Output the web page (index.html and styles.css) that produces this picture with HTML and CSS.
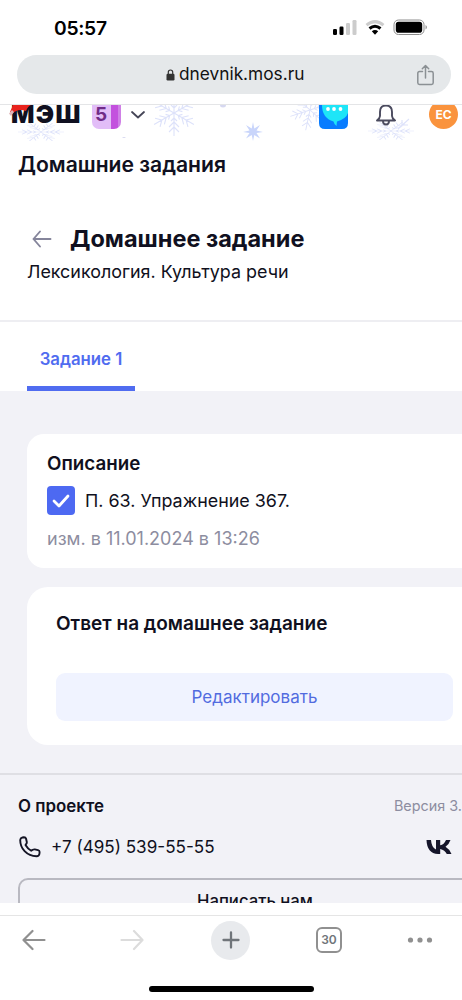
FILE: index.html
```
<!DOCTYPE html>
<html lang="ru">
<head>
<meta charset="utf-8">
<title>Домашние задания</title>
<link rel="stylesheet" href="styles.css">
</head>
<body>
<div class="phone">
  <div class="status">
    <span class="time">05:57</span>
    <svg class="status-icons" width="96" height="18" viewBox="0 0 96 18">
      <g><rect x="0" y="10" width="4" height="6" rx="1.2"/><rect x="6.5" y="7.5" width="4" height="8.500" rx="1.2"/><rect x="13" y="4" width="4" height="12" rx="1.200" fill="#ccc"/><rect x="19.500" y="1" width="4" height="15" rx="1.200" fill="#ccc"/></g>
      <g fill="none" stroke-width="3"><path d="M33.500 6.200Q42 -1 50.500 6.200" stroke="#ccc"/><path d="M36.500 9.500Q42 5 47.500 9.500" stroke="#000"/></g>
      <path d="M38.800 12.300Q42 9.700 45.200 12.300L42 15.700Z"/>
      <rect x="61" y="1" width="30" height="14.500" rx="4.500" fill="none" stroke="#8c8c8c"/><rect x="62.800" y="2.800" width="26.400" height="10.900" rx="2.800"/><path d="M92.500 6q3 2.200 0 4.600z" fill="#999"/>
    </svg>
  </div>
  <div class="address">
    <svg class="lock" width="9" height="12" viewBox="0 0 9 12"><rect x=".5" y="4.800" width="8" height="6.700" rx="1.200" fill="#333"/><path d="M2.300 5V3.200a2.200 2.200 0 0 1 4.400 0V5" fill="none" stroke="#333" stroke-width="1.200"/></svg>
    <span class="url">dnevnik.mos.ru</span>
    <svg class="share" width="20" height="22" viewBox="0 0 20 22" fill="none" stroke="#8b9094" stroke-width="1.500" stroke-linecap="round" stroke-linejoin="round"><path d="M6.500 7.500H3.500Q1.800 7.500 1.800 9.200V18.800Q1.800 20.500 3.500 20.500H15.500Q17.200 20.500 17.200 18.800V9.200Q17.200 7.500 15.500 7.500H12.500M9.500 14V1.700M6.300 4.700L9.500 1.500L12.700 4.700"/></svg>
  </div>
  <div class="page">
    <header class="site">
      <svg class="snow" width="462" height="36" viewBox="0 0 462 36" fill="none" stroke="#dde2fa" stroke-width="1.100">
        <defs>
          <g id="flake"><path id="arm" d="M0 0V-23M0 -9L-5 -14M0 -9L5 -14M0 -14L-5 -19M0 -14L5 -19M0 -5L-3 -8M0 -5L3 -8"/><use href="#arm" transform="rotate(60)"/><use href="#arm" transform="rotate(120)"/><use href="#arm" transform="rotate(180)"/><use href="#arm" transform="rotate(240)"/><use href="#arm" transform="rotate(300)"/></g>
        </defs>
        <use href="#flake" transform="translate(41 27) rotate(90) scale(.45 1)"/>
        <use href="#flake" transform="translate(174 8)"/>
        <use href="#flake" transform="translate(310 5) rotate(12) scale(.9)"/>
        <use href="#flake" transform="translate(391 26) rotate(90) scale(.45 1)"/>
        <path d="M398 24L409 14M402 20V15M402 20H408"/>
        <path d="M253 17L254.300 23.500L260 20L256.500 25.500L263 27L256.500 28L260 33.500L254.300 30L253 36L251.700 30L246 33.500L249.500 28L243 27L249.500 25.500L246 20L251.700 23.500Z" fill="#c9d5fb" stroke="none"/>
        <path d="M220 0a3 2.500 0 0 0 6 0M122 33q2-2 4 0" fill="#d6d8f0" stroke="none"/>
      </svg>
      <span class="logo">МЭШ</span>
      <svg class="hat" width="22" height="12" viewBox="0 0 22 12"><path d="M1 7L4 0H22Q19 1 17 6Q9 3 3 9Z" fill="#e9231d"/><path d="M0 8.500L3 5L5 7L2 11Z" fill="#dfb6b9"/></svg>
      <span class="grade">5</span>
      <svg class="chevron" width="16" height="10" viewBox="0 0 16 10" fill="none" stroke="#454557" stroke-width="1.800" stroke-linecap="round" stroke-linejoin="round"><path d="M2 2L8 7.500L14 2"/></svg>
      <svg class="chat" width="29" height="24" viewBox="0 0 29 24"><path d="M0 0H29V18Q29 24 23 24H6Q0 24 0 18Z" fill="#087cff"/><path d="M3 0H29V8Q27 14 18 16.500L17.500 21Q15 19 14.500 16.500Q3 13 3 0Z" fill="#1ee5f7"/><g fill="#fff"><circle cx="9" cy="4" r="1.900"/><circle cx="15" cy="4" r="1.900"/><circle cx="21.500" cy="4" r="1.900"/></g></svg>
      <svg class="bell" width="22" height="21" viewBox="0 0 22 21" fill="none" stroke="#4a4a5e" stroke-width="1.900" stroke-linejoin="round"><path d="M5 7Q5 .5 11 .5Q17 .5 17 7V11Q17 13 20 15.500H2Q5 13 5 11ZM8 16Q8 19.500 11 19.500Q14 19.500 14 16"/></svg>
      <span class="avatar">ЕС</span>
    </header>
    <h1 class="section-title">Домашние задания</h1>
    <div class="heading">
      <svg width="20" height="18" viewBox="0 0 20 18" fill="none" stroke="#85859b" stroke-width="1.900" stroke-linecap="round" stroke-linejoin="round"><path d="M18.500 9H1.500M8 1.500L1.500 9L8 16.500"/></svg>
      <h2>Домашнее задание</h2>
    </div>
    <p class="topic">Лексикология. Культура речи</p>
    <nav class="tabs"><span class="tab"><span class="tab-label">Задание 1</span></span></nav>
    <main class="content">
      <section class="card description">
        <h3>Описание</h3>
        <div class="task">
          <span class="check"><svg width="18" height="14" viewBox="0 0 18 14" fill="none" stroke="#fff" stroke-width="2.800" stroke-linecap="round" stroke-linejoin="round"><path d="M2 7L7 12L16 2"/></svg></span>
          <span class="task-text">П. 63. Упражнение 367.</span>
        </div>
        <p class="changed">изм. в 11.01.2024 в 13:26</p>
      </section>
      <section class="card answer">
        <h3>Ответ на домашнее задание</h3>
        <div class="edit"><span>Редактировать</span></div>
      </section>
    </main>
    <footer class="footer">
      <div class="about"><strong>О проекте</strong><span class="version">Версия 3.</span></div>
      <div class="contacts">
        <svg width="22" height="22" viewBox="0 0 22 22" fill="none" stroke="#151525" stroke-width="1.900" stroke-linejoin="round"><path d="M3.400 1.500L5 1.200Q6.600 1.200 7 2.500L7.800 6Q8 7 7.300 7.800L6.500 9Q8.500 12.500 12.200 14.800L13.800 13.800Q14.800 13.200 15.800 13.400L19 14.200Q20.600 14.700 20.600 16L20.400 18Q20.100 20.300 17.500 20.300Q10.500 20.300 5.600 15.200Q1.200 10.500 1.200 4Q1.300 2 3.400 1.500Z"/></svg>
        <span class="number">+7 (495) 539-55-55</span>
        <svg class="vk" width="26" height="16" viewBox="0 0 26 16"><path d="M.5 1H5Q5.500 8.500 10 10.500V1H14.200V6.200Q18 5.800 20 1H24.500Q23 5.500 19.500 7.700Q23.500 10 25.500 15H20.800Q18.800 11 14.200 10V15H12Q1 14.500 .5 1Z" fill="#15152a"/></svg>
      </div>
      <div class="write"><span>Написать нам</span></div>
    </footer>
  </div>
  <div class="toolbar">
    <svg width="24" height="22" viewBox="0 0 24 22" fill="none" stroke="#909090" stroke-width="2.200" stroke-linecap="round" stroke-linejoin="round"><path d="M22.500 11H1.500M10.500 2L1.500 11L10.500 20"/></svg>
    <svg class="forward" width="24" height="22" viewBox="0 0 24 22" fill="none" stroke="#dcdcdc" stroke-width="2.200" stroke-linecap="round" stroke-linejoin="round"><path d="M1.500 11H22.500M14 2L22.500 11L14 20"/></svg>
    <span class="plus"><svg width="18" height="18" viewBox="0 0 18 18" stroke="#70757a" stroke-width="2.300" stroke-linecap="round"><path d="M9 1.500V16.500M1.500 9H16.500"/></svg></span>
    <span class="count">30</span>
    <svg class="more" width="26" height="6" viewBox="0 0 26 6" fill="#909090"><circle cx="3.500" cy="3" r="2.600"/><circle cx="13" cy="3" r="2.600"/><circle cx="22.500" cy="3" r="2.600"/></svg>
  </div>
  <div class="home"></div>
</div>
</body>
</html>
```
FILE: styles.css
```
* { box-sizing: border-box; }
body { margin: 0; background: #fff; color: #101020; font-family: Inter, "Liberation Sans", sans-serif; }
h1, h2, h3, p { margin: 0; white-space: nowrap; }
svg { display: block; flex: none; }
.phone { width: 462px; height: 1000px; overflow: hidden; display: flex; flex-direction: column; }
.status { height: 55px; flex: none; display: flex; justify-content: space-between; padding: 16px 33px 0 54px; }
.time { font-size: 19.3px; line-height: 24px; font-weight: 600; letter-spacing: -.3px; color: #000; }
.status-icons { margin-top: 3px; }
.address { height: 39px; flex: none; margin: 0 11px 10px 17px; padding: 0 15px 0 149px; border-radius: 20px; background: #e5e8ea; display: flex; align-items: center; }
.url { margin: -2px 0 0 4px; font-size: 17.3px; line-height: 22px; color: #111; }
.share { margin-left: auto; }
.page { height: 799px; flex: none; overflow: hidden; background: #fff; border-top: 1px solid #e4e5e7; }
.site { position: relative; height: 36px; display: flex; align-items: flex-start; overflow: hidden; }
.snow { position: absolute; left: 0; top: 0; }
.logo { position: relative; margin: -5px 0 0 11px; width: 72px; font-size: 24.5px; line-height: 28px; font-weight: 900; letter-spacing: 1.4px; white-space: nowrap; }
.hat { position: absolute; left: 9px; top: 0; }
.grade { position: relative; margin-left: 9px; width: 29px; height: 24px; padding-left: 3px; border-radius: 0 0 7px 7px; background: linear-gradient(90deg, #e2bdf8 0 19px, #c351de 19px 26px, #cf80e6 26px); color: #702b88; font-size: 19px; line-height: 20px; font-weight: 700; }
.chevron { position: relative; margin: 5px 0 0 9px; }
.chat { position: relative; margin-left: 173px; }
.bell { position: relative; margin-left: 27px; }
.avatar { position: relative; margin: -5px 0 0 32px; width: 29px; height: 29px; flex: none; border-radius: 50%; background: #fa933d; color: #fff; font-size: 12px; line-height: 29px; font-weight: 700; text-align: center; }
.section-title { padding: 10px 0 0 18px; font-size: 21.1px; line-height: 28px; font-weight: 600; }
.heading { display: flex; align-items: center; gap: 18px; margin-top: 44px; padding-left: 32px; height: 32px; }
.heading h2 { font-size: 23.5px; line-height: 32px; font-weight: 700; }
.topic { padding: 4px 0 0 27px; height: 65px; font-size: 17.9px; line-height: 26px; }
.tabs { height: 71px; border-top: 2px solid #eeeef2; padding-left: 27px; display: flex; }
.tab { width: 108px; height: 69px; border-bottom: 5px solid #506cf0; padding-top: 25px; text-align: center; font-size: 16.8px; line-height: 24px; font-weight: 600; color: #506cf0; }
.content { background: #f2f2f7; padding: 43px 0 28px 27px; display: flex; flex-direction: column; gap: 19px; }
.card { background: #fff; }
.card h3 { font-size: 19px; line-height: 26px; font-weight: 600; }
.description { height: 134px; border-radius: 17px 0 0 17px; padding: 17px 0 0 20px; }
.description h3 { font-size: 18.8px; }
.task { display: flex; align-items: center; height: 29px; gap: 10px; margin-top: 9px; }
.check { width: 28px; height: 29px; border-radius: 4px; background: #4d69f2; display: flex; align-items: center; justify-content: center; }
.task-text { font-size: 17.9px; line-height: 26px; }
.changed { margin-top: 11px; font-size: 18px; line-height: 26px; color: #8d8da0; }
.answer { height: 158px; border-radius: 21px 0 0 21px; padding: 24px 9px 0 29px; }
.edit { margin-top: 36px; height: 48px; border-radius: 9px; background: #f0f3ff; text-align: center; font-size: 17px; line-height: 48px; color: #526bdf; }
.footer { height: 140px; background: #f2f2f7; border-top: 2px solid #dfdfe4; padding: 18px 0 0 18px; }
.about { display: flex; justify-content: space-between; font-size: 16.9px; line-height: 26px; }
.about strong { font-weight: 600; }
.version { font-size: 14.4px; color: #8d8da0; white-space: nowrap; }
.contacts { display: flex; align-items: center; height: 26px; margin-top: 15px; padding: 0 10px 0 1px; }
.number { margin-left: 10px; font-size: 17.1px; line-height: 26px; }
.vk { margin-left: auto; }
.write { margin: 18px -10px 0 0; height: 48px; padding-left: 177px; border: 2px solid #b9b9c1; border-radius: 10px; font-size: 16.7px; line-height: 43px; font-weight: 500; }
.toolbar { flex: none; margin-top: 12px; height: 49px; border-top: 1px solid #e5e5e5; padding-left: 22px; display: flex; align-items: center; }
.forward { margin-left: 74px; }
.plus { width: 39px; height: 39px; margin-left: 67px; border-radius: 50%; background: #e8eaed; display: flex; align-items: center; justify-content: center; }
.count { width: 26px; height: 26px; margin-left: 66px; border: 2px solid #909090; border-radius: 6px; font-size: 12px; line-height: 22px; font-weight: 600; color: #70757a; text-align: center; }
.more { margin-left: 65px; }
.home { flex: none; width: 165px; height: 6px; margin: 22px 0 0 149px; border-radius: 3px; background: #000; }
```
